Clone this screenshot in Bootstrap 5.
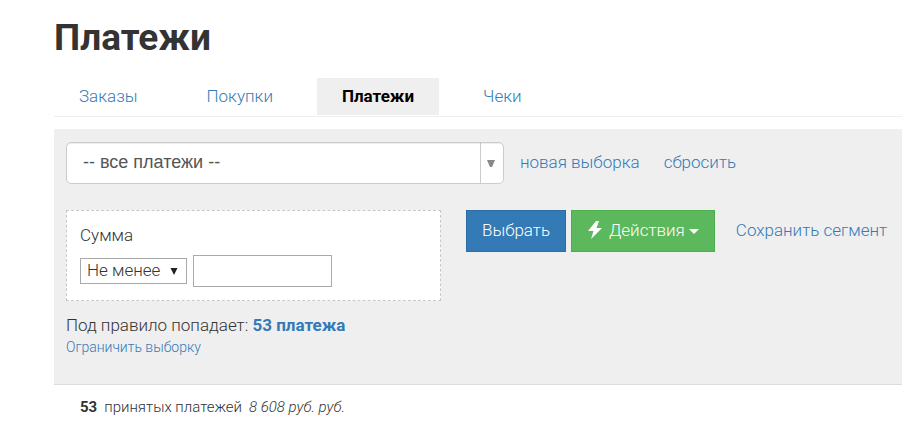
<!DOCTYPE html>
<html lang="ru">
<head>
<meta charset="utf-8">
<meta name="viewport" content="width=device-width, initial-scale=1">
<title>Платежи</title>
<link href="https://cdn.jsdelivr.net/npm/bootstrap@5.3.0/dist/css/bootstrap.min.css" rel="stylesheet">
<style>
  body { font-family: Roboto, "Open Sans", sans-serif; font-size: 17px; font-weight: 300; line-height: 24px; color: #333; }
  a { color: #337ab7; }
  b, strong { font-weight: 700; }
  select { appearance: none; }
  .page { padding: 16px 0 0 54px; }
  .page-title { font-size: 37px; line-height: 44px; font-weight: 700; }
  .tabs { gap: 19px; margin-top: 18px; padding-bottom: 1px; border-bottom: 1px solid #eee; }
  .tabs .nav-link { padding: 6px 25px 7px; color: #337ab7; }
  .tabs .nav-link.active { background: #efefef; color: #000; font-weight: 700; }
  .filter { margin-top: 12px; padding: 13px 12px 27px; background: #efefef; border-bottom: 1px solid #ddd; }
  .segment { width: 438px; height: 42px; padding: 0 36px 2px 16px; border: 1px solid #ccc; border-radius: 5px; color: #555;
    font: 18px/24px "Liberation Sans", Arial, sans-serif;
    background: url("data:image/svg+xml,%3Csvg xmlns='http://www.w3.org/2000/svg' width='23' height='40'%3E%3Cpath d='M.5 0v40' stroke='%23ccc'/%3E%3Cpath d='M7 17h8l-3 7h-2z' fill='%23888'/%3E%3C/svg%3E") right center no-repeat #fff;
    box-shadow: inset 0 1px 1px rgba(0,0,0,.08); }
  .segment-links { gap: 24px; margin-left: 16px; padding-bottom: 2px; }
  .rules { gap: 25px; margin-top: 26px; }
  .rule { width: 375px; padding: 12px 13px 13px; background: #fff; border: 1px dashed #c8c8c8; }
  .compare { width: 107px; height: 26px; padding: 0 20px 2px 6px; border: 1px solid #a9a9a9; color: #333; font-weight: 300; line-height: 22px;
    background: url("data:image/svg+xml,%3Csvg xmlns='http://www.w3.org/2000/svg' width='8' height='8'%3E%3Cpath d='M.5 1h7L4 8z' fill='%23222'/%3E%3C/svg%3E") right 8px center no-repeat #fff; }
  .amount { width: 139px; height: 32px; margin-left: 6px; border: 1px solid #a9a9a9; background: #fff; }
  .action { height: 42px; padding: 0 15px; border-radius: 0; font-size: 17px; font-weight: 300; color: #fff; }
  .action-primary, .action-primary:hover { background: #337ab7; border-color: #2e6da4; color: #fff; }
  .action-success, .action-success:hover { background: #5cb85c; border-color: #4cae4c; color: #fff; }
  .action-row { gap: 5px; }
  .action-label { margin: 0 4px 0 6px; }
  .caret { width: 10px; height: 5px; }
  .save-link { margin-left: 16px; padding-bottom: 2px; }
  .found { margin-top: 12px; }
  .small-link { font-size: 14px; line-height: 20px; }
  .summary { padding: 12px 26px; font-size: 15px; line-height: 20px; gap: 7px; }
</style>
<script src="https://cdn.jsdelivr.net/npm/bootstrap@5.3.0/dist/js/bootstrap.bundle.min.js" defer></script>
</head>
<body>
<main class="page">
  <h1 class="page-title mb-0">Платежи</h1>
  <nav class="nav tabs" aria-label="Разделы">
    <a class="nav-link" href="#">Заказы</a>
    <a class="nav-link" href="#">Покупки</a>
    <a class="nav-link active" aria-current="page" href="#">Платежи</a>
    <a class="nav-link" href="#">Чеки</a>
  </nav>
  <section class="filter">
    <div class="d-flex flex-wrap align-items-center">
      <select class="segment" aria-label="Сегмент"><option>-- все платежи --</option></select>
      <div class="d-flex segment-links">
        <a class="text-decoration-none" href="#">новая выборка</a>
        <a class="text-decoration-none" href="#">сбросить</a>
      </div>
    </div>
    <div class="d-flex rules align-items-start">
      <div class="rule flex-shrink-0">
        <label class="d-block" for="amount">Сумма</label>
        <div class="d-flex align-items-center mt-2">
          <select class="compare" aria-label="Условие"><option>Не менее</option></select>
          <input class="amount" id="amount" type="text">
        </div>
      </div>
      <div class="d-flex align-items-center action-row text-nowrap">
        <button class="btn action action-primary" type="button">Выбрать</button>
        <button class="btn action action-success d-flex align-items-center" type="button">
          <svg width="16" height="20" viewBox="0 0 16 20" fill="#fff" aria-hidden="true"><path d="M9 0 1 10h5.500L4 18 15 7H9.500L12 0z"/></svg>
          <span class="action-label">Действия</span>
          <svg class="caret" viewBox="0 0 10 5" fill="#fff" aria-hidden="true"><path d="M0 0h10L5 5z"/></svg>
        </button>
        <a class="text-decoration-none save-link" href="#">Сохранить сегмент</a>
      </div>
    </div>
    <div class="found">Под правило попадает: <a class="text-decoration-none" href="#"><strong>53 платежа</strong></a></div>
    <a class="text-decoration-none small-link d-block" href="#">Ограничить выборку</a>
  </section>
  <div class="d-flex summary"><b>53</b><span>принятых платежей</span><em>8 608 руб. руб.</em></div>
</main>
</body>
</html>
